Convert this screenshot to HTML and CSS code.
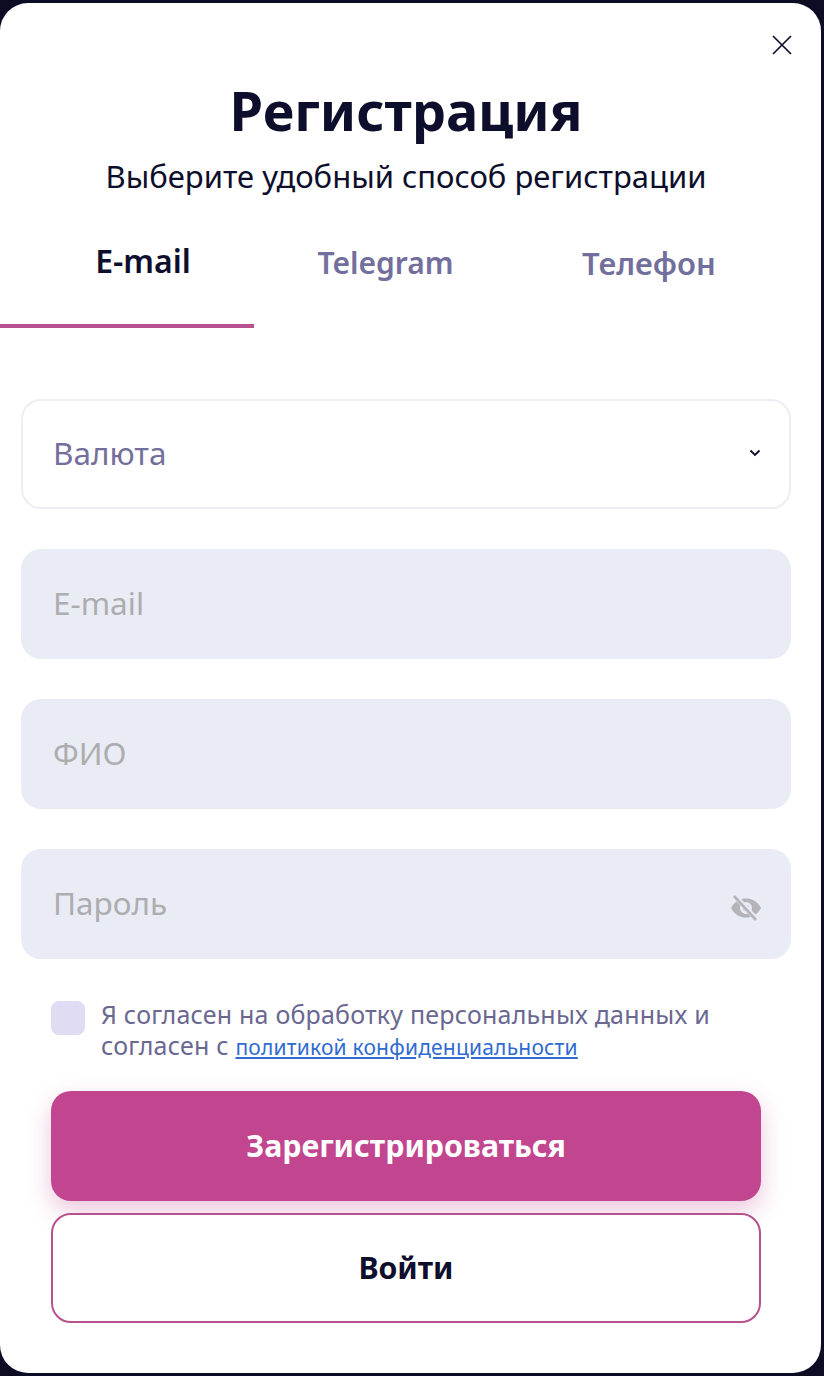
FILE: index.html
```html
<!DOCTYPE html>
<html lang="ru">
<head>
<meta charset="utf-8">
<title>Регистрация</title>
<link rel="stylesheet" href="styles.css">
</head>
<body>
<div class="modal">
  <button class="close" aria-label="Закрыть">
    <svg width="22" height="22" viewBox="0 0 22 22"><path d="M2 2 L20 20 M20 2 L2 20" stroke="#0d0e2b" stroke-width="1.7" fill="none"/></svg>
  </button>
  <div class="content">
    <h1 class="title">Регистрация</h1>
    <p class="subtitle">Выберите удобный способ регистрации</p>
    <div class="tabs">
      <div class="tab tab-active">E-mail</div>
      <div class="tab">Telegram</div>
      <div class="tab tab-phone">Телефон</div>
    </div>
    <div class="fields">
      <div class="field field-select">
        <span>Валюта</span>
        <svg class="chevron" width="12" height="8" viewBox="0 0 12 8"><path d="M1.5 1.5 L6 6 L10.5 1.5" stroke="#0d0e2b" stroke-width="1.8" fill="none"/></svg>
      </div>
      <div class="field field-input"><span>E-mail</span></div>
      <div class="field field-input"><span>ФИО</span></div>
      <div class="field field-input field-password">
        <span>Пароль</span>
        <svg class="eye" width="32" height="26" viewBox="0 0 32 26">
          <path fill="#b3b3b8" fill-rule="evenodd" d="M1 13 C5 6 10 3.500 16 3.500 C22 3.500 27 6 31 13 C27 20 22 22.500 16 22.500 C10 22.500 5 20 1 13 Z M16 7 A6 6 0 1 0 16 19 A6 6 0 1 0 16 7 Z M16 10 A3 3 0 1 1 16 16 A3 3 0 1 1 16 10 Z"/>
          <path d="M5 1 L27 25" stroke="#e9ecf4" stroke-width="5"/>
          <path d="M4 1 L26 25" stroke="#b3b3b8" stroke-width="2.600"/>
        </svg>
      </div>
    </div>
    <div class="agree">
      <span class="checkbox"></span>
      <p class="agree-text">Я согласен на обработку персональных данных и согласен с <a class="agree-link" href="#">политикой конфиденциальности</a></p>
    </div>
    <div class="actions">
      <button class="btn btn-primary">Зарегистрироваться</button>
      <button class="btn btn-outline">Войти</button>
    </div>
  </div>
</div>
</body>
</html>
```
FILE: styles.css
```css
* { box-sizing: border-box; }
html, body { height: 100%; }
body {
  margin: 0;
  background: #0c0c24;
  padding: 3px 3px 3px 0;
  overflow: hidden;
  font-family: "Noto Sans", "Open Sans", sans-serif;
  color: #0d0e2b;
}
.modal {
  position: relative;
  height: 1370px;
  background: #fff;
  border-radius: 28px;
}
.close {
  position: absolute;
  top: 31px;
  right: 28px;
  width: 22px;
  height: 22px;
  padding: 0;
  border: 0;
  background: none;
  display: flex;
}
.content {
  width: 812px;
  padding-top: 74px;
}
.title {
  margin: 0;
  text-align: center;
  font-size: 54px;
  line-height: 66px;
  font-weight: 700;
}
.subtitle {
  margin: 13px 0 0;
  text-align: center;
  font-size: 31px;
  line-height: 40px;
  font-weight: 400;
}
.tabs {
  display: grid;
  grid-template-columns: 254px 263px 264px;
  margin-top: 24px;
  height: 108px;
}
.tab {
  font-size: 30px;
  font-weight: 600;
  line-height: 40px;
  padding-top: 23px;
  text-align: center;
  color: #736f9c;
}
.tab-phone { font-size: 31px; }
.tab-active {
  color: #0d0e2b;
  font-size: 32px;
  padding-left: 32px;
  padding-top: 21px;
  border-bottom: 4px solid #b8528f;
}
.fields {
  display: flex;
  flex-direction: column;
  gap: 40px;
  margin: 71px 21px 0;
}
.field {
  height: 110px;
  border-radius: 20px;
  padding: 0 32px 4px;
  display: flex;
  align-items: center;
  justify-content: space-between;
  font-size: 31.500px;
}
.field-select {
  border: 2px solid #eceef3;
  padding-left: 30px;
  color: #736f9c;
}
.field-input {
  background: #e9ecf4;
  color: #adadb0;
}
.field-password { padding-right: 29px; }
.eye { margin-top: 12px; }
.chevron { margin-right: -4px; margin-top: 1px; }
.agree {
  display: flex;
  gap: 16px;
  margin: 40px 51px 0;
}
.checkbox {
  flex: none;
  width: 34px;
  height: 34px;
  margin-top: 2px;
  border-radius: 8px;
  background: #dfdcf3;
}
.agree-text {
  margin: 0;
  font-size: 25px;
  line-height: 30.500px;
  color: #6a6791;
  letter-spacing: 0.2px;
}
.agree-link {
  font-size: 21px;
  color: #2f6bd0;
  text-decoration: underline;
}
.actions {
  display: flex;
  flex-direction: column;
  gap: 12px;
  margin: 29px 51px 0;
}
.btn {
  height: 110px;
  border-radius: 20px;
  font-family: inherit;
  font-size: 30.300px;
  font-weight: 700;
  padding: 0 0 2px;
}
.btn-primary {
  border: 0;
  color: #fff;
  background: #c1468f;
  box-shadow: 0 10px 24px rgba(193, 70, 143, 0.3);
}
.btn-outline {
  border: 2px solid #b8528f;
  background: #fff;
  color: #0d0e2b;
  position: relative;
}
```
